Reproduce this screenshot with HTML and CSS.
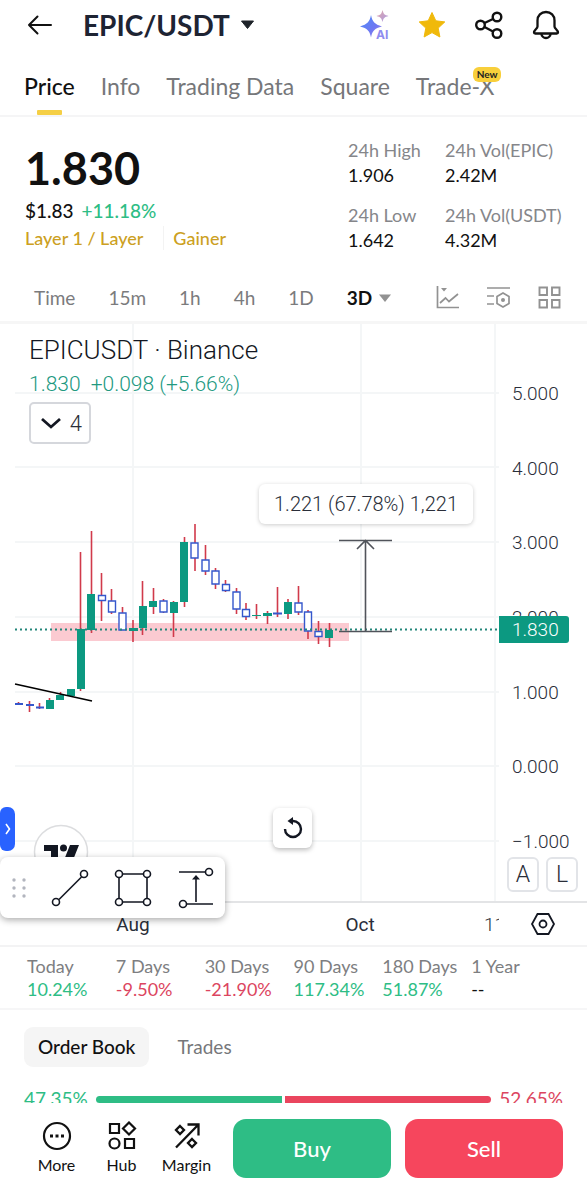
FILE: index.html
```html
<!DOCTYPE html>
<html lang="en">
<head>
<meta charset="utf-8">
<meta name="viewport" content="width=device-width, initial-scale=1">
<title>EPIC/USDT</title>
<link rel="stylesheet" href="styles.css">
</head>
<body>
<div class="app">
  <header class="topbar">
    <button class="icon-btn" aria-label="Back">
      <svg width="26" height="22" viewBox="0 0 26 22" fill="none" stroke="#111" stroke-width="2" stroke-linecap="round" stroke-linejoin="round"><path d="M24 11H2M10.500 2.500L2 11l8.500 8.500"/></svg>
    </button>
    <button class="pair"><span>EPIC/USDT</span>
      <svg width="15" height="10" viewBox="0 0 15 10"><path d="M1.500 1h12l-6 7.500z" fill="#1e2329" stroke="#1e2329" stroke-linejoin="round"/></svg>
    </button>
    <div class="actions">
      <button class="icon-btn" aria-label="AI">
        <svg width="32" height="32" viewBox="0 0 32 32">
          <defs><linearGradient id="ai" x1="0" y1="0" x2="1" y2="1"><stop offset="0" stop-color="#4b8df8"/><stop offset=".6" stop-color="#6f78f2"/><stop offset="1" stop-color="#a78bea"/></linearGradient>
          <linearGradient id="aj" x1="0" y1="0" x2="1" y2="1"><stop offset="0" stop-color="#e3a7a5"/><stop offset="1" stop-color="#a99be8"/></linearGradient></defs>
          <path d="M13 6c1.500 7 3.500 9 11 11.500-7.500 2-9.500 4-11 11-1.500-7-3.500-9-11-11C9.500 15 11.500 13 13 6z" fill="url(#ai)"/>
          <path d="M24.500 1c1 4 2 5 6 6-4 1-5 2-6 6-1-4-2-5-6-6 4-1 5-2 6-6z" fill="url(#aj)"/>
          <path d="M19 20h13v12H18z" fill="#fff"/>
          <text class="ai-text" x="18" y="30">AI</text>
        </svg>
      </button>
      <button class="icon-btn" aria-label="Favorite">
        <svg width="30" height="30" viewBox="0 0 30 30"><path d="M15 2.500l3.800 8.300 9 1.100-6.600 6.200 1.700 8.900-7.900-4.400-7.900 4.400 1.700-8.900-6.600-6.200 9-1.100z" fill="#f0b90b" stroke="#f0b90b" stroke-linejoin="round"/></svg>
      </button>
      <button class="icon-btn" aria-label="Share">
        <svg width="30" height="30" viewBox="0 0 30 30" fill="none" stroke="#111" stroke-width="2.400"><circle cx="6.500" cy="15" r="4.300"/><circle cx="23" cy="7" r="4.300"/><circle cx="23" cy="23.500" r="4.300"/><path d="M10.500 13l8.500-4M10.500 17l8.500 4.500"/></svg>
      </button>
      <button class="icon-btn" aria-label="Alerts">
        <svg width="30" height="30" viewBox="0 0 30 30" fill="none" stroke="#111" stroke-width="2.300" stroke-linejoin="round"><path d="M15 2c-5 0-8.500 3.500-8.500 8.500v6c0 2.200-3.500 3.500-3.500 6 0 .8.500 1 1.200 1h21.600c.7 0 1.200-.2 1.200-1 0-2.500-3.500-3.800-3.500-6v-6C23.500 5.500 20 2 15 2z"/><path d="M10.500 24c0 2 2 4 4.500 4s4.500-2 4.500-4"/></svg>
      </button>
    </div>
  </header>

  <nav class="tabs">
    <a class="tab tab-active" href="#">Price</a>
    <a class="tab" href="#">Info</a>
    <a class="tab" href="#">Trading Data</a>
    <a class="tab" href="#">Square</a>
    <a class="tab" href="#">Trade-X<span class="badge">New</span></a>
  </nav>

  <main class="content">
    <section class="summary">
      <div class="quote">
        <div class="price">1.830</div>
        <div class="fiat">$1.83 <span class="up">+11.18%</span></div>
        <div class="tags"><a href="#">Layer 1 / Layer</a><a class="tag-next" href="#">Gainer</a></div>
      </div>
      <dl class="stats">
        <div><dt>24h High</dt><dd>1.906</dd></div>
        <div><dt>24h Vol(EPIC)</dt><dd>2.42M</dd></div>
        <div><dt>24h Low</dt><dd>1.642</dd></div>
        <div><dt>24h Vol(USDT)</dt><dd>4.32M</dd></div>
      </dl>
    </section>

    <div class="frames">
      <button>Time</button><button>15m</button><button>1h</button><button>4h</button><button>1D</button>
      <button class="frame-active">3D <svg width="12" height="8" viewBox="0 0 12 8"><path d="M0 .5h12L6 8z" fill="#929292"/></svg></button>
      <div class="frame-tools">
        <button aria-label="Indicators"><svg width="23" height="23" viewBox="0 0 23 23" fill="none" stroke="#929292" stroke-width="1.700"><path d="M1.500 0v21.500H23M4 17l5.500-5 3.500 3.500L22 8"/><path d="M5 2h6L8 5.500z" fill="#929292" stroke="none"/></svg></button>
        <button aria-label="Chart settings"><svg width="23" height="23" viewBox="0 0 23 23" fill="none" stroke="#929292" stroke-width="1.700"><path d="M0 2h23M0 10h7M0 18h7M16 7l6 3.500v7L16 21l-6-3.500v-7z"/><circle cx="16" cy="14" r="2" fill="#929292" stroke="none"/></svg></button>
        <button aria-label="Layout"><svg width="23" height="23" viewBox="0 0 23 23" fill="none" stroke="#929292" stroke-width="1.900"><path d="M1.500 1.500h7.500v7.500H1.500zM14 1.500h7.500v7.500H14zM1.500 14h7.500v7.500H1.500zM14 14h7.500v7.500H14z"/></svg></button>
      </div>
    </div>

    <section class="chart">
      <div class="plot">
        <svg class="plot-canvas" width="100%" height="577">
          <g class="grid">
            <path d="M133 0V577M361 0V577M495 0V577"/>
            <line x1="15" x2="100%" y1="69" y2="69"/><line x1="15" x2="100%" y1="143" y2="143"/><line x1="15" x2="100%" y1="218" y2="218"/><line x1="15" x2="100%" y1="293" y2="293"/><line x1="15" x2="100%" y1="368" y2="368"/><line x1="15" x2="100%" y1="442" y2="442"/><line x1="15" x2="100%" y1="517" y2="517"/>
          </g>
          <rect x="51" y="299" width="298" height="18" fill="#fbcad1"/>
          <path class="wick" d="M18.500 378v3M29.500 377v11M39.500 379v6M49.500 374v11M60.500 368v8M80.500 228v139M91.500 207v102M101.500 249v48M111.500 265v25M122.500 283v23M133 296v22M142.500 257v54M153.500 264v26M163.500 275v14M173.500 277v36M184.500 213v70M195 200v47M205.500 221v30M215.500 244v21M225.500 256v12M236.500 264v26M246 279v17M256.500 280v15M267.500 287v13M277.500 263v30M288 275v20M298.500 262v29M308 286v29M318.500 297v23M329.500 299v24"/>
          <path class="rise" d="M46 376h8v9h-8zM56 371h8v5h-8zM67 365h8v7h-8zM77 305h8v60h-8zM87 270h8v36h-8zM129 304h9v3h-9zM139 282h8v22h-8zM149 277h8v6h-8zM170 278h8v11h-8zM180 218h8v60h-8zM252 291h9v1h-9zM263 289h9v3h-9zM284 278h8v12h-8zM325 306h8v8h-8z"/>
          <path class="flat" d="M15 380h8M26 381h8M36 383.500h8M273 289.500h9"/>
          <path class="fall" d="M98.500 271.500h7v5h-7zM108.500 277h7v11h-7zM119 289h7v17h-7zM160 277h7v11h-7zM191 219h7v15h-7zM202 236h7v11h-7zM212 247h7v13h-7zM222.500 260.500h7v6h-7zM233 268h7v17h-7zM242.500 285.500h7v7h-7zM295 279h7v9h-7zM304.500 288h7v19h-7zM315 307.500h7v5h-7z"/>
          <path d="M15 360L92 377" stroke="#000" stroke-width="1.600"/>
          <line class="last-line" x1="15" x2="100%" y1="305.500" y2="305.500"/>
          <path d="M339 216.500h53M339 307.500h53M365.500 307V217M357 225l8.500-8.500 8.500 8.500" fill="none" stroke="#50535a" stroke-width="1.600"/>
        </svg>
        <div class="legend">
          <h1>EPICUSDT · Binance</h1>
          <p class="change"><span>1.830</span><span>+0.098 (+5.66%)</span></p>
          <button class="studies"><svg width="20" height="12" viewBox="0 0 20 12" fill="none" stroke="#131722" stroke-width="2.800"><path d="M1 2l9 8 9-8"/></svg>4</button>
        </div>
        <div class="measure">1.221 (67.78%) 1,221</div>
        <svg class="tv-logo" width="56" height="56" viewBox="0 0 56 56"><circle cx="28" cy="28" r="26.500" fill="#fff" stroke="#dcdddf" stroke-width="1.500"/><path d="M11 21h14v20h-7V27h-7zM37 21h9l-8 20h-9z" fill="#131722"/><circle cx="30.500" cy="24" r="3.500" fill="#131722"/></svg>
        <button class="drawer" aria-label="Open tools"><svg width="6" height="14" viewBox="0 0 6 14" fill="none" stroke="#fff" stroke-width="1.600"><path d="M1 2l3.500 5L1 12"/></svg></button>
        <button class="reset" aria-label="Reset chart"><svg width="22" height="22" viewBox="0 0 22 22" fill="none" stroke="#131722" stroke-width="2.400"><path d="M3 12a8 8 0 1 0 8-8"/><path d="M11 0v8L5.500 4z" fill="#131722" stroke="none"/></svg></button>
      </div>
      <div class="scale">
        <span>5.000</span><span>4.000</span><span>3.000</span><span>2.000</span><span>1.000</span><span>0.000</span><span>−1.000</span>
        <div class="last">1.830</div>
        <div class="modes"><button>A</button><button>L</button></div>
      </div>
      <svg class="dates" width="100%" height="44"><text class="major" x="133" y="28" text-anchor="middle">Aug</text><text class="major" x="360" y="28" text-anchor="middle">Oct</text><text x="484" y="28">11</text></svg>
      <button class="axis-settings" aria-label="Axis settings"><svg width="26" height="24" viewBox="0 0 26 24" fill="none" stroke="#131722" stroke-width="1.800"><path d="M7.500 2h11L24 12l-5.500 10h-11L2 12z"/><circle cx="13" cy="12" r="3.500"/></svg></button>
      <div class="toolbar">
        <svg width="14" height="22" viewBox="0 0 14 22" fill="#b2b5be"><circle cx="2" cy="3" r="1.700"/><circle cx="12" cy="3" r="1.700"/><circle cx="2" cy="11" r="1.700"/><circle cx="12" cy="11" r="1.700"/><circle cx="2" cy="19" r="1.700"/><circle cx="12" cy="19" r="1.700"/></svg>
        <button aria-label="Trend line"><svg width="38" height="38" viewBox="0 0 38 38" fill="none" stroke="#131722" stroke-width="1.600"><circle cx="5" cy="33" r="3.500"/><circle cx="33" cy="5" r="3.500"/><path d="M8 30.500L30.500 8"/></svg></button>
        <button aria-label="Rectangle"><svg width="38" height="38" viewBox="0 0 38 38" fill="none" stroke="#131722" stroke-width="1.600"><circle cx="5" cy="5" r="3.500"/><circle cx="33" cy="5" r="3.500"/><circle cx="5" cy="33" r="3.500"/><circle cx="33" cy="33" r="3.500"/><path d="M8.500 5h21M8.500 33h21M5 8.500v21M33 8.500v21"/></svg></button>
        <button aria-label="Price range"><svg width="38" height="42" viewBox="0 0 38 42" fill="none" stroke="#131722" stroke-width="1.600"><path d="M2 5h26M10 37h26M19 35V11"/><circle cx="32" cy="5" r="3.500"/><circle cx="6" cy="37" r="3.500"/><path d="M19 8l4 4.500h-8z" fill="#131722" stroke="none"/></svg></button>
      </div>
    </section>

    <dl class="returns">
      <div><dt>Today</dt><dd class="up">10.24%</dd></div>
      <div><dt>7 Days</dt><dd class="down">-9.50%</dd></div>
      <div><dt>30 Days</dt><dd class="down">-21.90%</dd></div>
      <div><dt>90 Days</dt><dd class="up">117.34%</dd></div>
      <div><dt>180 Days</dt><dd class="up">51.87%</dd></div>
      <div><dt>1 Year</dt><dd>--</dd></div>
    </dl>

    <div class="book-tabs"><button class="book-active">Order Book</button><button>Trades</button></div>
    <div class="ratio">
      <span class="up">47.35%</span>
      <div class="ratio-bar"><div class="bid" style="flex-grow:47.35"></div><div class="ask" style="flex-grow:52.65"></div></div>
      <span class="down">52.65%</span>
    </div>
  </main>

  <footer class="bottom">
    <button class="nav-item"><svg width="30" height="30" viewBox="0 0 30 30" fill="none" stroke="#111" stroke-width="2.200"><circle cx="15" cy="15" r="13"/><path d="M8 15h3M13.500 15h3M19 15h3" stroke-width="3"/></svg>More</button>
    <button class="nav-item"><svg width="30" height="30" viewBox="0 0 30 30" fill="none" stroke="#111" stroke-width="2.200"><path d="M3 3h9v9H3zM18 18h9v9h-9zM22 1.500L28 7.500l-6 6-6-6z"/><circle cx="7.500" cy="22.500" r="5"/></svg>Hub</button>
    <button class="nav-item"><svg width="30" height="30" viewBox="0 0 30 30" fill="none" stroke="#111" stroke-width="2.300"><path d="M4 26.500L26 4M15.500 3.500h11v11M8 5l4 4-4 4-4-4zM20 18l4 4-4 4-4-4z"/></svg>Margin</button>
    <button class="trade buy">Buy</button>
    <button class="trade sell">Sell</button>
  </footer>
</div>
</body>
</html>
```
FILE: styles.css
```css
* { box-sizing: border-box; }
body { margin: 0; background: #fff; color: #111; font-family: Lato, "Open Sans", sans-serif; }
button { border: 0; padding: 0; margin: 0; background: none; color: inherit; font: inherit; cursor: pointer; }
a { color: inherit; text-decoration: none; }
dl, dd, h1, p { margin: 0; }
svg { display: block; flex: none; }
.app { display: flex; flex-direction: column; height: 100vh; }
.up { color: #2ebd85; }
.down { color: #dc4560; }

.topbar { display: flex; align-items: center; height: 50px; padding: 0 26px 0 27px; }
.pair { display: flex; align-items: center; gap: 10px; margin-left: 30px; color: #1e2433; font-size: 28px; line-height: 32px; font-weight: 700; }
.actions { display: flex; align-items: center; gap: 27px; margin-left: auto; }
.ai-text { font: 700 12px Inter, sans-serif; fill: #8f8cef; }

.tabs { display: flex; flex: none; gap: 26px; height: 67px; padding: 0 24px; border-bottom: 2px solid #f5f5f6; color: #76777a; font-size: 23px; line-height: 72px; white-space: nowrap; }
.tab { position: relative; }
.tab-active { color: #111; font-weight: 500; }
.tab-active::after { content: ""; position: absolute; left: 50%; bottom: 0; width: 25px; height: 5px; margin-left: -12px; border-radius: 1px; background: #f5cf45; }
.badge { position: absolute; top: 17px; right: -7px; padding: 0 4px; border-radius: 6px; background: #f8cf3b; color: #222; font-size: 10px; line-height: 15px; font-weight: 700; }

.content { flex: 1; min-height: 0; overflow-y: auto; scrollbar-width: none; }
.summary { display: flex; justify-content: space-between; height: 157px; padding: 21px 20px 0 25px; }
.price { padding-top: 2px; font-size: 45px; line-height: 56px; font-weight: 700; }
.fiat { font-size: 19px; line-height: 30px; font-weight: 500; }
.fiat .up { margin-left: 3px; }
.tags { display: flex; gap: 20px; color: #cca022; font-size: 18px; line-height: 24px; font-weight: 500; }
.tag-next { padding-left: 9px; border-left: 1px solid #f3f3f3; }
.stats { display: grid; grid-template-columns: 97px 122px; grid-auto-rows: 65px; font-size: 18px; line-height: 25px; white-space: nowrap; }
.stats dt { color: #85868a; }

.frames { display: flex; align-items: center; gap: 33px; height: 50px; padding: 0 26px 0 34px; border-bottom: 3px solid #f6f6f6; color: #7b7b7d; font-size: 19px; line-height: 24px; }
.frame-active { display: flex; align-items: center; gap: 7px; color: #111; font-weight: 700; }
.frame-tools { display: flex; gap: 28px; margin-left: auto; }

.chart { position: relative; display: grid; grid-template: 577px 44px / minmax(0, 1fr) 88px; border-bottom: 2px solid #f3f3f4; color: #2a2e39; font-family: Roboto, sans-serif; font-weight: 300; }
.plot { position: relative; overflow: hidden; }
.grid { stroke: #f4f6f7; stroke-width: 2; }
.wick { stroke: #d13a4b; stroke-width: 1.6; }
.rise { fill: #0c9981; }
.flat { stroke: #3557cc; stroke-width: 2; }
.fall { fill: #fff; stroke: #3557cc; stroke-width: 1.4; }
.last-line { stroke: #23867a; stroke-width: 2; stroke-dasharray: 2 3; }
.legend { position: absolute; top: 10px; left: 29px; }
.legend h1 { font-size: 26px; line-height: 32px; font-weight: 300; color: #131722; }
.change { display: flex; gap: 10px; color: #22997f; font-size: 21px; line-height: 36px; }
.studies { display: flex; align-items: center; justify-content: space-between; width: 62px; height: 42px; padding: 0 7px 0 10px; border: 2px solid #d5d7dc; border-radius: 5px; background: #fff; font-size: 22px; }
.measure { position: absolute; top: 160px; left: 259px; padding: 0 15px; border-radius: 6px; background: #fff; box-shadow: 0 1px 4px #0003; font-size: 20px; line-height: 40px; white-space: nowrap; }
.tv-logo { position: absolute; left: 33px; top: 500px; }
.drawer { position: absolute; left: 0; top: 483px; display: grid; place-items: center; width: 15px; height: 44px; border-radius: 6px 7px 7px 6px; background: #2962ff; }
.reset { position: absolute; left: 273px; top: 484px; display: grid; place-items: center; width: 39px; height: 40px; border-radius: 6px; background: #fff; box-shadow: 0 2px 5px #0004; }
.scale { position: relative; display: grid; grid-auto-rows: 1fr; height: 523px; margin-top: 32px; padding-left: 13px; font-size: 19px; align-items: center; }
.last { position: absolute; top: 260px; left: 0; width: 70px; padding-left: 13px; border-radius: 0 3px 3px 0; background: #0c9981; color: #fff; line-height: 27px; }
.modes { position: absolute; left: 8px; top: 501px; display: flex; gap: 7px; }
.modes button { width: 32px; height: 35px; border: 2px solid #e2e4e8; border-radius: 6px; background: #fff; font-size: 23px; }
.dates { border-top: 2px solid #e3e4e6; font-size: 19px; fill: #2a2e39; }
.major { font-weight: 400; }
.axis-settings { display: grid; place-items: center; border-top: 2px solid #e3e4e6; }
.toolbar { position: absolute; left: 0; top: 533px; display: flex; align-items: center; gap: 25px; width: 225px; height: 61px; padding-left: 12px; border-radius: 8px; background: #fff; box-shadow: 0 2px 7px #0005; }

.returns { display: grid; grid-template-columns: repeat(6, 1fr); height: 63px; padding: 8px 27px 0 27px; border-bottom: 2px solid #f6f6f7; font-size: 18px; line-height: 23px; white-space: nowrap; }
.returns dt { color: #7d7e81; }
.book-tabs { display: flex; gap: 14px; padding: 17px 24px 0; color: #76777a; font-size: 19px; line-height: 40px; }
.book-tabs button { padding: 0 14px; }
.book-active { border-radius: 9px; background: #f5f5f5; color: #111; font-weight: 500; }
.ratio { display: flex; align-items: center; gap: 8px; padding: 20px 24px 0; font-size: 19px; line-height: 24px; }
.ratio-bar { display: flex; flex: 1; gap: 3px; height: 7px; }
.bid { flex-basis: 0; border-radius: 4px 0 0 4px; background: #2ebd85; }
.ask { flex-basis: 0; border-radius: 0 4px 4px 0; background: #ea455e; }

.bottom { display: flex; flex: none; align-items: flex-start; height: 97px; padding: 16px 24px 0; background: #fff; }
.nav-item { display: flex; flex: none; flex-direction: column; align-items: center; gap: 3px; width: 65px; padding-top: 2px; font-size: 16px; line-height: 22px; }
.trade { flex: 1; height: 59px; margin-left: 14px; border-radius: 13px; color: #fff; font-size: 22px; font-weight: 500; }
.buy { background: #2ebd85; }
.sell { background: #f6465d; }
```
